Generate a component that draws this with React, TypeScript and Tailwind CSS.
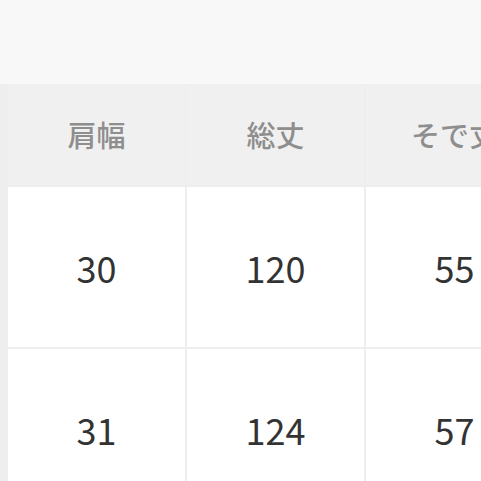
import React from "react"

const headers = ["肩幅", "総丈", "そで丈"]
const rows = [
  ["30", "120", "55"],
  ["31", "124", "57"],
]

const font = { fontFamily: '"Noto Sans CJK JP", "Noto Sans", sans-serif' }

export default function App() {
  return (
    <div className="w-[481px] h-[481px] overflow-hidden bg-[#efefef]" style={font}>
      {/* Top band */}
      <div className="h-[84px] bg-[#f8f8f8]" />

      {/* Size table */}
      <div className="pl-[8px] bg-[#eeeeee]">
        <div className="grid grid-cols-[177px_177px_177px] gap-[2px] w-max">
          {headers.map((h) => (
            <div
              key={h}
              className="h-[101px] bg-[#f0f0f0] flex items-center justify-center text-[29px] font-medium text-[#8e8e8e] whitespace-nowrap"
            >
              {h}
            </div>
          ))}
          {rows.map((row, i) =>
            row.map((v, j) => (
              <div
                key={`${i}-${j}`}
                className="h-[160px] bg-white flex items-center justify-center text-[36px] text-[#333333]"
              >
                {v}
              </div>
            ))
          )}
        </div>
      </div>
    </div>
  )
}
